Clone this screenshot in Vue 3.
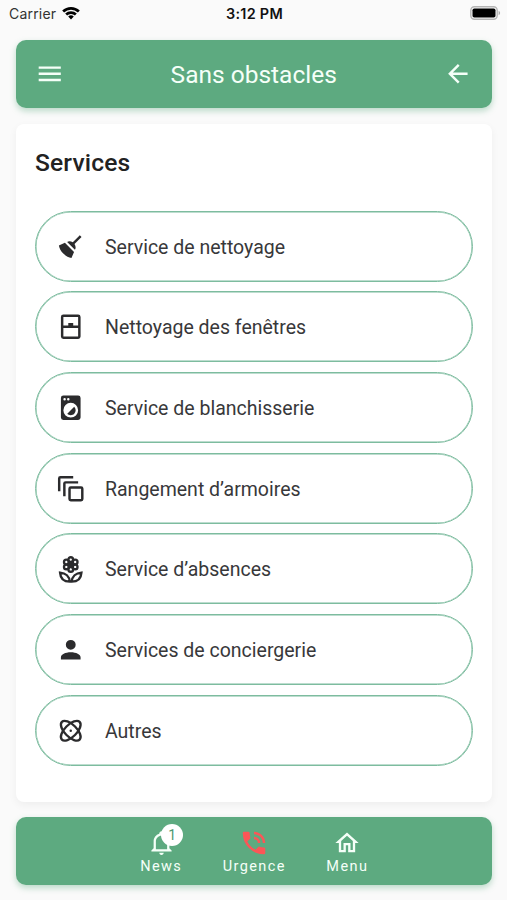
<script setup>
const items = [
  { icon: 'broom', label: 'Service de nettoyage' },
  { icon: 'window', label: 'Nettoyage des fenêtres' },
  { icon: 'washer', label: 'Service de blanchisserie' },
  { icon: 'stack', label: 'Rangement d’armoires' },
  { icon: 'flower', label: 'Service d’absences' },
  { icon: 'person', label: 'Services de conciergerie' },
  { icon: 'atom', label: 'Autres' }
]
const paths = {
  broom: 'M19.36 2.72l1.42 1.42-5.72 5.71c1.07 1.54 1.22 3.39.32 4.59L9.06 8.12c1.2-.9 3.05-.75 4.59.32l5.71-5.72M5.93 17.57c-2.01-2.01-3.24-4.41-3.58-6.65l4.88-2.09 7.44 7.44-2.09 4.88c-2.24-.34-4.64-1.57-6.65-3.58z',
  window: 'M6 11h4V9h4v2h4V4H6v7m12 2H6v7h12v-7M6 2h12a2 2 0 0 1 2 2v16a2 2 0 0 1-2 2H6a2 2 0 0 1-2-2V4a2 2 0 0 1 2-2z',
  washer: 'M14.83 11.17c1.56 1.56 1.56 4.1 0 5.66-1.56 1.56-4.1 1.56-5.66 0l5.66-5.66M6 2h12a2 2 0 0 1 2 2v16a2 2 0 0 1-2 2H6a2 2 0 0 1-2-2V4a2 2 0 0 1 2-2m1 2a1 1 0 0 0-1 1 1 1 0 0 0 1 1 1 1 0 0 0 1-1 1 1 0 0 0-1-1m3 0a1 1 0 0 0-1 1 1 1 0 0 0 1 1 1 1 0 0 0 1-1 1 1 0 0 0-1-1m2 4a6 6 0 0 0-6 6 6 6 0 0 0 6 6 6 6 0 0 0 6-6 6 6 0 0 0-6-6z',
  person: 'M12 4a4 4 0 1 1 0 8 4 4 0 0 1 0-8m0 10c4.42 0 8 1.79 8 4v2H4v-2c0-2.21 3.58-4 8-4z'
}
const petals = [[12, 3.7], [15.6, 5.7], [15.6, 9.7], [12, 11.7], [8.4, 9.7], [8.4, 5.7]]
</script>

<template>
  <div class="screen">
    <div class="status">
      <div class="carrier">
        <span>Carrier</span>
        <svg class="wifi" viewBox="0 0 18 14">
          <path d="M.2 4.5a12.6 12.6 0 0 1 17.6 0l-1.9 2a9.8 9.8 0 0 0-13.8 0zM3.2 7.5a8.3 8.3 0 0 1 11.6 0l-1.9 2a5.5 5.5 0 0 0-7.8 0zM6.2 10.6a4 4 0 0 1 5.6 0L9 13.5z" />
        </svg>
      </div>
      <span class="time">3:12 PM</span>
      <div class="power">
        <svg class="battery" viewBox="0 0 31 14">
          <rect x=".8" y=".8" width="26.4" height="12.4" rx="3.6" fill="#fafafa" stroke="#b5b5b5" stroke-width="1.4" />
          <rect x="2.5" y="2.5" width="23" height="9" rx="1.8" />
          <path d="M28.6 4.8c2 .8 2 3.6 0 4.4z" fill="#aaa" />
        </svg>
      </div>
    </div>

    <header class="bar header">
      <svg class="icon" viewBox="0 0 24 24"><path d="M3 6h18v2H3V6m0 5h18v2H3v-2m0 5h18v2H3v-2z" /></svg>
      <h1>Sans obstacles</h1>
      <svg class="icon" viewBox="0 0 24 24"><path d="M20 11v2H8l5.5 5.5-1.42 1.42L4.16 12l7.92-7.92L13.5 5.5 8 11h12z" /></svg>
    </header>

    <main class="card">
      <h2>Services</h2>
      <div class="list">
        <button v-for="item in items" :key="item.icon" class="item">
          <svg class="icon" viewBox="0 0 24 24">
            <g v-if="item.icon === 'stack'" fill="none" stroke="currentColor" stroke-width="2">
              <path d="M2.6 14V3.6a1 1 0 0 1 1-1H14M6.8 18V7.8a1 1 0 0 1 1-1H18" />
              <rect x="11" y="11" width="10.4" height="10.4" rx="1" />
            </g>
            <g v-else-if="item.icon === 'atom'">
              <g fill="none" stroke="currentColor" stroke-width="1.9">
                <ellipse cx="12" cy="12" rx="10.2" ry="4.9" transform="rotate(45 12 12)" />
                <ellipse cx="12" cy="12" rx="10.2" ry="4.9" transform="rotate(-45 12 12)" />
              </g>
              <circle cx="12" cy="12" r="1" />
            </g>
            <g v-else-if="item.icon === 'flower'">
              <g fill="none" stroke="currentColor" stroke-width="1.9">
                <circle v-for="(p, i) in petals" :key="i" :cx="p[0]" :cy="p[1]" r="1.9" />
                <path d="M11.2 21.7c-.3-4.1-3.3-7-7.9-7.4.3 4.6 3.2 7.4 7.9 7.4zM12.8 21.7c.3-4.1 3.3-7 7.9-7.4-.3 4.6-3.2 7.4-7.9 7.4z" />
              </g>
              <circle cx="12" cy="7.7" r="2.6" />
            </g>
            <path v-else fill-rule="evenodd" :d="paths[item.icon]" />
          </svg>
          <span>{{ item.label }}</span>
        </button>
      </div>
    </main>

    <nav class="bar nav">
      <a class="tab">
        <span class="glyph">
          <svg class="bell" viewBox="0 0 24 24"><path d="M10 21h4c0 1.1-.9 2-2 2s-2-.9-2-2m11-2v1H3v-1l2-2v-6c0-3.1 2.03-5.83 5-6.71V4c0-1.1.9-2 2-2s2 .9 2 2v.29c2.97.88 5 3.61 5 6.71v6l2 2m-4-8c0-2.76-2.24-5-5-5s-5 2.24-5 5v7h10v-7z" /></svg>
          <span class="badge">1</span>
        </span>
        <span>News</span>
      </a>
      <a class="tab">
        <span class="glyph">
          <svg class="phone" viewBox="0 0 24 24"><path d="M15 12h2a5 5 0 0 0-5-5v2a3 3 0 0 1 3 3m4 0h2c0-5-4.03-9-9-9v2c3.86 0 7 3.13 7 7m1 3.5c-1.25 0-2.45-.2-3.57-.57-.35-.11-.74-.03-1.02.24l-2.2 2.2a15.1 15.1 0 0 1-6.59-6.58l2.2-2.21c.28-.27.36-.66.25-1.01A11.4 11.4 0 0 1 8.5 4a1 1 0 0 0-1-1H4a1 1 0 0 0-1 1 17 17 0 0 0 17 17 1 1 0 0 0 1-1v-3.5a1 1 0 0 0-1-1z" /></svg>
        </span>
        <span>Urgence</span>
      </a>
      <a class="tab">
        <span class="glyph">
          <svg class="home" viewBox="0 0 24 24"><path d="M12 5.69l5 4.5V18h-2v-6H9v6H7v-7.81l5-4.5M12 3L2 12h3v8h6v-6h2v6h6v-8h3" /></svg>
        </span>
        <span>Menu</span>
      </a>
    </nav>
  </div>
</template>

<style>
body { margin: 0; background: #fafafa; }
</style>

<style scoped>
* { box-sizing: border-box; }
.screen {
  width: 507px;
  height: 900px;
  padding: 0 15px 15px 15.5px;
  display: flex;
  flex-direction: column;
  overflow: hidden;
  background: #fafafa;
  font-family: Roboto, "Liberation Sans", sans-serif;
}
svg { display: block; fill: currentColor; flex: none; }
.status {
  height: 40px;
  margin: 0 -8px 0 -6.5px;
  padding-top: 4px;
  display: grid;
  grid-template-columns: 1fr auto 1fr;
  align-items: start;
  font-family: Inter, sans-serif;
  font-size: 14px;
  line-height: 20px;
  color: #111;
}
.carrier { display: flex; align-items: center; gap: 5.5px; color: #333; letter-spacing: .2px; }
.wifi { width: 18px; height: 14px; margin-top: -3px; color: #000; }
.time { font-size: 14.4px; font-weight: 600; letter-spacing: .3px; }
.power { display: flex; justify-content: flex-end; padding-top: 2px; }
.battery { width: 31px; height: 14px; margin-right: -1px; color: #000; }
.bar {
  flex: none;
  border-radius: 10px;
  background: #5daa80;
  color: #f5fff8;
  box-shadow: 0 3px 6px rgba(93, 170, 128, .4);
}
.header {
  height: 68.5px;
  padding: 0 19.5px;
  display: flex;
  align-items: center;
  justify-content: space-between;
}
.icon { width: 29.5px; height: 29.5px; }
h1 { margin: 0; padding-top: 1px; font-size: 24.5px; font-weight: 400; }
.card {
  height: 678px;
  margin: 15.5px 0;
  padding: 0 19.5px;
  flex: none;
  border-radius: 8px;
  background: #fff;
  box-shadow: 0 3px 8px rgba(0, 0, 0, .05);
}
h2 {
  margin: 0;
  height: 87px;
  padding-top: 23px;
  font-size: 24.6px;
  line-height: 32px;
  font-weight: 500;
  letter-spacing: .15px;
  color: #222;
}
.list { display: flex; flex-direction: column; gap: 9.7px; }
.item {
  height: 71px;
  padding: 1px 19.5px 0;
  display: flex;
  align-items: center;
  gap: 20px;
  border: 1px solid #7dbc9f;
  border-radius: 36px;
  background: #fff;
  box-shadow: inset 0 0 0 .5px #7dbc9f;
  color: #2b2b2d;
  font: 400 19.5px/24px Roboto, "Liberation Sans", sans-serif;
}
.item span { padding-top: 2px; color: #38383a; }
.nav {
  height: 68px;
  padding: 11px 0 0 1px;
  display: flex;
  justify-content: center;
  gap: 40.5px;
}
.tab {
  display: flex;
  flex-direction: column;
  align-items: center;
  font-size: 14.5px;
  line-height: 20px;
  letter-spacing: 1.4px;
}
.glyph { position: relative; height: 29px; display: flex; align-items: center; }
.bell { width: 27px; height: 27px; }
.phone { width: 30px; height: 30px; color: #fb5657; }
.home { width: 28px; height: 28px; }
.badge {
  position: absolute;
  left: 13.5px;
  top: -4px;
  width: 22px;
  height: 22px;
  border-radius: 50%;
  background: #fff;
  color: #4d9a70;
  font-size: 14px;
  line-height: 23px;
  letter-spacing: 0;
  text-align: center;
}
</style>
